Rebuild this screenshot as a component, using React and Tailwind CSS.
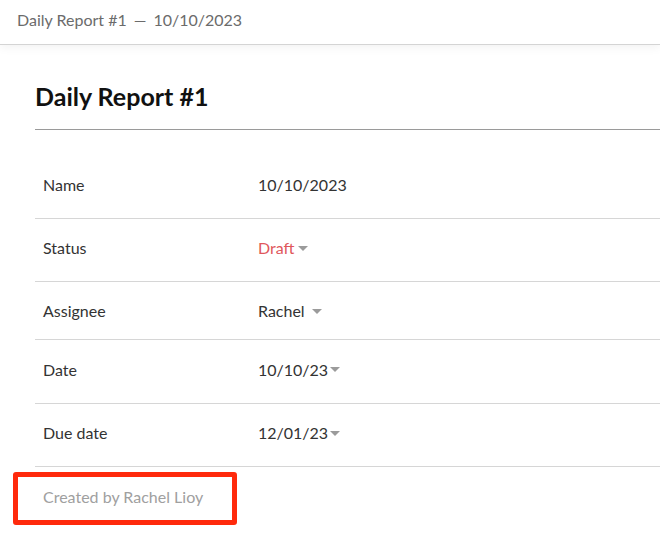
import React from "react";

function Caret() {
  return (
    <svg width="10" height="5" viewBox="0 0 10 5" className="inline-block">
      <path d="M0 0 L10 0 L5 5 Z" fill="#9b9b9b" />
    </svg>
  );
}

const rows = [
  { label: "Name", value: "10/10/2023", h: "h-[63px] pb-[4px]" },
  { label: "Status", value: "Draft", red: true, caret: true, gap: "ml-[4px]", h: "h-[63px] pb-[4px]" },
  { label: "Assignee", value: "Rachel", caret: true, gap: "ml-[7px]", h: "h-[58px] pt-[1px]" },
  { label: "Date", value: "10/10/23", caret: true, gap: "ml-[2px]", h: "h-[64px] pb-[4px]" },
  { label: "Due date", value: "12/01/23", caret: true, gap: "ml-[2px]", h: "h-[63px] pb-[4px]" },
];

export default function App() {
  return (
    <div className="min-h-[534px] bg-white font-['Lato','Liberation_Sans',sans-serif] relative overflow-hidden">
      <header className="h-[45px] border-b border-[#d4d4d4] px-[17px] flex items-center text-[16px] text-[#6b6b6b] shadow-[0_2px_10px_rgba(0,0,0,0.06)] relative z-10 pb-[5px]">
        Daily Report #1 <span className="mx-[7px]">—</span> 10/10/2023
      </header>
      <main className="pl-[35px]">
        <h1 className="pt-[37px] pb-[18px] text-[25px] leading-[29px] font-bold text-[#111] border-b border-[#9a9a9a]">
          Daily Report #1
        </h1>
        <div className="mt-[26px]">
          {rows.map((r) => (
            <div
              key={r.label}
              className={`${r.h} flex items-center border-b border-[#d6d6d6] text-[16px] text-[#333]`}
            >
              <div className="w-[223px] pl-[8px]">{r.label}</div>
              <div className="flex items-center">
                <span className={r.red ? "text-[#e0575b]" : ""}>{r.value}</span>
                {r.caret && (
                  <span className={`${r.gap} flex items-center`}>
                    <Caret />
                  </span>
                )}
              </div>
            </div>
          ))}
        </div>
        <div className="pl-[8px] pt-[18px] text-[16px] text-[#a0a0a0]">Created by Rachel Lioy</div>
      </main>
      <div className="absolute left-[13px] top-[472px] w-[224px] h-[53px] border-[5px] border-[#ff2a0c] rounded-[3px] pointer-events-none" />
    </div>
  );
}
